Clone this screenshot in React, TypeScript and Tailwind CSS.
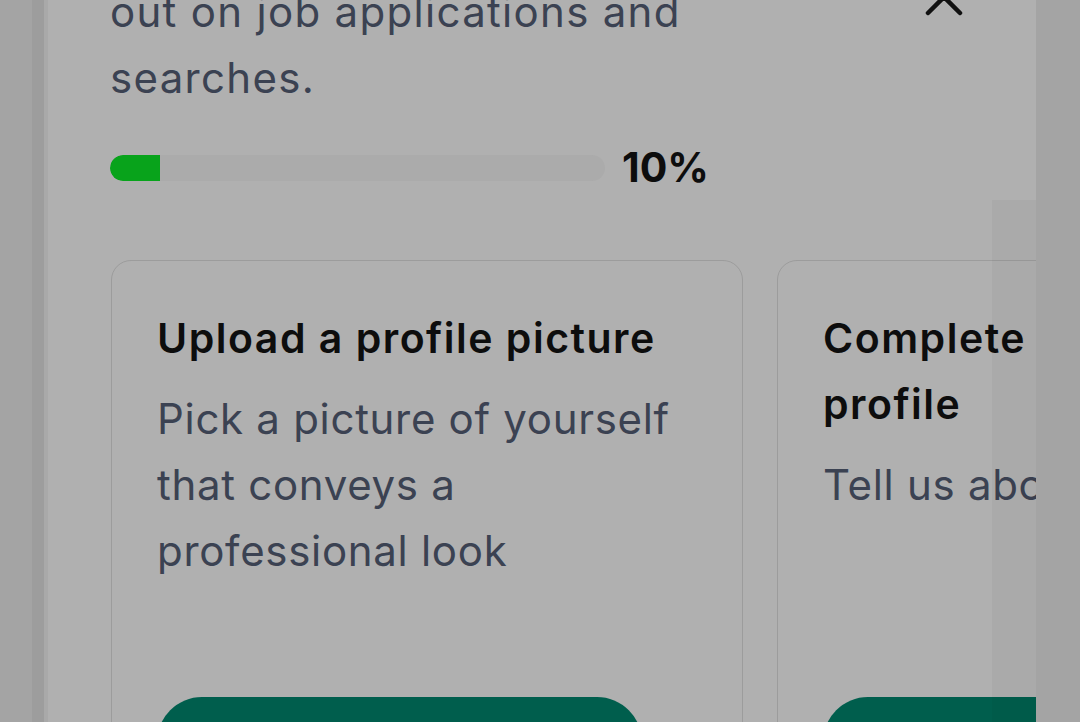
import React from "react";

function Card({ title, desc, button }: { title: React.ReactNode; desc: React.ReactNode; button: string }) {
  return (
    <div className="w-[632px] h-[528px] shrink-0 rounded-[20px] border border-[#9c9c9c] pl-[45px] pr-[40px] pt-[44px] flex flex-col">
      <h3 className="text-[#0d0d0d] font-semibold text-[41px] leading-[66px] tracking-[1.5px] whitespace-nowrap">{title}</h3>
      <p className="mt-[15px] max-w-[525px] text-[#3b4252] text-[42px] leading-[66px] tracking-[0.7px]">{desc}</p>
      <div className="mt-auto">
        <div className="w-[485px] h-[90px] rounded-t-[45px] bg-[#005e4d] flex items-center justify-center text-white text-[40px] font-semibold">{button}</div>
      </div>
    </div>
  );
}

export default function App() {
  return (
    <div
      className="w-[1080px] h-[722px] overflow-hidden bg-[#a4a4a4] flex"
      style={{ fontFamily: "Inter, 'Noto Sans', sans-serif" }}
    >
      <div className="w-[32px] shrink-0" />
      <div className="w-[12px] shrink-0 bg-[#9d9d9d]" />
      <div className="relative w-[992px] shrink-0 h-full bg-[#b0b0b0] border-l-[4px] border-[#a9a9a9] overflow-hidden">
        <div className="-mt-[21px] pl-[62px]">
          <div className="flex items-start justify-between pr-[72px]">
            <p className="text-[#3b4252] text-[42px] leading-[66px] tracking-[1.3px] whitespace-nowrap">
              out on job applications and
              <br />
              searches.
            </p>
            <svg width="40" height="40" viewBox="0 0 40 40" className="-mt-[2px]" fill="none">
              <path d="M4 4 L36 36 M36 4 L4 36" stroke="#111" strokeWidth="4.5" strokeLinecap="round" />
            </svg>
          </div>
          <div className="mt-[36px] flex items-center gap-[17px]">
            <div className="w-[495px] h-[26px] rounded-full bg-[#ababab] overflow-hidden">
              <div className="w-[50px] h-full rounded-l-full bg-[#08a31b]" />
            </div>
            <span className="text-[#0d0d0d] font-bold text-[41px] leading-none">10%</span>
          </div>
          <div className="mt-[72px] pl-[1px] flex gap-[34px] w-[926px] overflow-hidden">
            <Card
              title="Upload a profile picture"
              desc={<>Pick a picture of yourself that conveys a professional look</>}
              button="Upload"
            />
            <Card
              title={<>Complete your<br />profile</>}
              desc="Tell us about yourself"
              button="Complete"
            />
          </div>
        </div>
        <div className="absolute right-0 top-[200px] bottom-0 w-[44px] bg-[#000000]/[0.03]" />
      </div>
    </div>
  );
}
